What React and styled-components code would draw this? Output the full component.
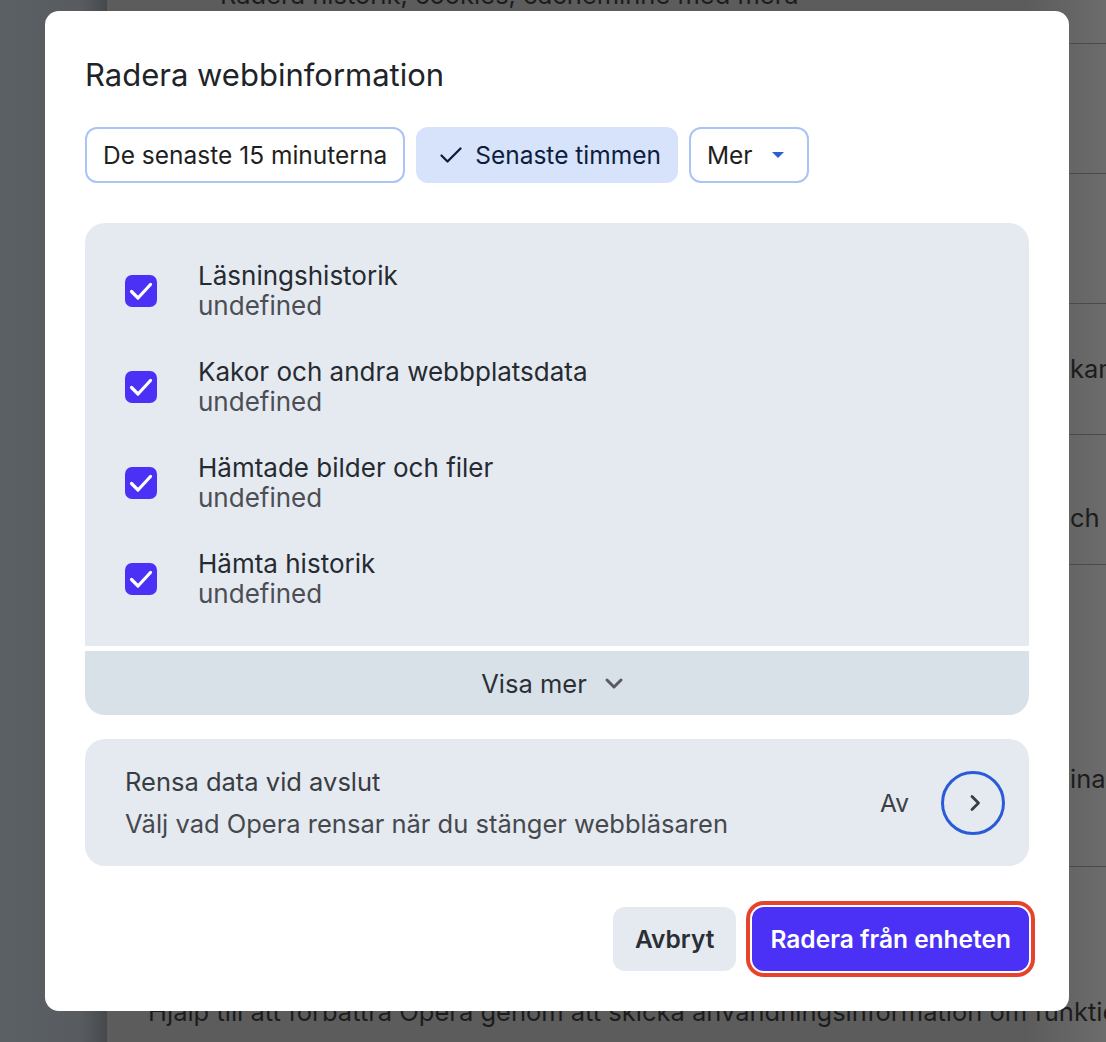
import React from "react";
import styled, { createGlobalStyle } from "styled-components";

const GlobalStyle = createGlobalStyle`
  * { box-sizing: border-box; }
  html, body { margin: 0; padding: 0; height: 100%; overflow: hidden; }
  body { font-family: Inter, "Noto Sans", "Liberation Sans", sans-serif; }
  #root { height: 100%; }
`;

/* dimmed settings page behind the dialog */
const Page = styled.div`
  display: flex;
  height: 100vh;
  background: #5c5c5c;
`;
const Sidebar = styled.div`
  width: 107px;
  flex-shrink: 0;
  background: linear-gradient(to right, #5b6064 0%, #585c60 75%, #46494c 100%);
`;
const Content = styled.div`
  flex: 1;
  display: flex;
  flex-direction: column;
  margin-top: -20px;
  background: linear-gradient(to right, #5c5c5c 0%, #5c5c5c 92%, #6c6c6c 100%);
  overflow: hidden;
`;
const BgRow = styled.div`
  height: ${(p) => p.$h}px;
  flex-shrink: 0;
  display: grid;
  grid-template-columns: ${(p) => (p.$full ? "1fr" : "922px 1fr")};
  align-items: ${(p) => (p.$pt !== undefined ? "start" : "center")};
  padding-top: ${(p) => p.$pt || 0}px;
  padding-left: ${(p) => p.$indent || 41}px;
  border-bottom: ${(p) => (p.$line ? "1px solid #4a4a4a" : "none")};
  font-size: 25.5px;
  line-height: 30px;
  color: #1c1c1c;
  white-space: nowrap;
`;
const BgText = styled.span`
  overflow: hidden;
`;

/* dialog */
const Overlay = styled.div`
  position: fixed;
  inset: 0;
  display: flex;
  align-items: flex-start;
  padding: 11px 0 0 45px;
`;
const Dialog = styled.div`
  width: 1024px;
  background: #ffffff;
  border-radius: 14px;
  padding: 46px 40px 40px;
  display: flex;
  flex-direction: column;
`;
const Title = styled.h1`
  margin: 0 0 34px;
  font-size: 31px;
  line-height: 36px;
  font-weight: 400;
  color: #202327;
`;
const Chips = styled.div`
  display: flex;
  gap: 11px;
  margin-bottom: 40px;
`;
const Chip = styled.button`
  height: 56px;
  display: flex;
  align-items: center;
  gap: 12px;
  padding: ${(p) => (p.$selected ? "0 15px 0 21px" : "0 16px")};
  border-radius: 12px;
  border: 2px solid ${(p) => (p.$selected ? "transparent" : "#a9c5f5")};
  background: ${(p) => (p.$selected ? "#d6e3fa" : "#ffffff")};
  color: ${(p) => (p.$selected ? "#0e1d3d" : "#1f1f1f")};
  font-family: inherit;
  font-size: 24.5px;
  cursor: pointer;
`;
const ListPanel = styled.div`
  background: #e5e9f0;
  border-radius: 20px 20px 0 0;
  padding: 20px 0 19px;
  display: flex;
  flex-direction: column;
`;
const Item = styled.label`
  height: 96px;
  display: flex;
  align-items: center;
  gap: 41px;
  padding-left: 40px;
`;
const Box = styled.span`
  width: 32px;
  height: 32px;
  border-radius: 7px;
  background: #4a31f5;
  display: flex;
  align-items: center;
  justify-content: center;
`;
const ItemText = styled.div`
  display: flex;
  flex-direction: column;
`;
const ItemTitle = styled.span`
  font-size: 26px;
  line-height: 30px;
  color: #262b31;
`;
const ItemSub = styled.span`
  font-size: 26px;
  line-height: 30px;
  color: #4b4f54;
`;
const ShowMore = styled.button`
  margin-top: 5px;
  height: 64px;
  border: none;
  border-radius: 0 0 20px 20px;
  background: #d9e1e8;
  display: flex;
  align-items: center;
  justify-content: center;
  gap: 16px;
  padding: 0 8px 0 0;
  font-family: inherit;
  font-size: 25.5px;
  color: #2b3036;
  cursor: pointer;
`;
const ExitPanel = styled.div`
  margin-top: 24px;
  background: #e5e9f0;
  border-radius: 20px;
  padding: 28px 24px 27px 40px;
  display: flex;
  align-items: center;
`;
const ExitText = styled.div`
  flex: 1;
  display: flex;
  flex-direction: column;
  gap: 12px;
`;
const ExitTitle = styled.span`
  font-size: 25.5px;
  line-height: 30px;
  color: #393d41;
`;
const ExitSub = styled.span`
  font-size: 25.5px;
  line-height: 30px;
  color: #45494d;
`;
const State = styled.span`
  font-size: 24.5px;
  color: #3c4043;
  margin-right: 32px;
`;
const RoundButton = styled.button`
  width: 64px;
  height: 64px;
  border-radius: 50%;
  border: 3px solid #2a5bd7;
  background: transparent;
  display: flex;
  align-items: center;
  justify-content: center;
  padding: 0 0 0 3px;
  cursor: pointer;
`;
const Actions = styled.div`
  margin-top: 41px;
  display: flex;
  justify-content: flex-end;
  gap: 16px;
`;
const Button = styled.button`
  height: 64px;
  padding: 0 ${(p) => (p.$primary ? 18 : 22)}px;
  border: none;
  border-radius: 12px;
  background: ${(p) => (p.$primary ? "#4a31f5" : "#e5e9f0")};
  color: ${(p) => (p.$primary ? "#ffffff" : "#2a2f35")};
  box-shadow: ${(p) =>
    p.$primary ? "0 0 0 2px #ffffff, 0 0 0 6px #e6432c" : "none"};
  font-family: inherit;
  font-size: 24.5px;
  font-weight: 600;
  cursor: pointer;
`;

const Check = ({ color = "#fff", size = 24, width = 3.2, d = "M2.5 12.5l6.5 6.5L21.5 5.5" }) => (
  <svg width={size} height={size} viewBox="0 0 24 24" fill="none">
    <path
      d={d}
      stroke={color}
      strokeWidth={width}
      strokeLinecap="round"
      strokeLinejoin="round"
    />
  </svg>
);

const items = [
  "Läsningshistorik",
  "Kakor och andra webbplatsdata",
  "Hämtade bilder och filer",
  "Hämta historik",
];

export default function App() {
  return (
    <>
      <GlobalStyle />
      <Page>
        <Sidebar />
        <Content>
          <BgRow $h={64} $indent={113} $pt={0} $full $line>
            <BgText>Radera historik, cookies, cacheminne med mera</BgText>
          </BgRow>
          <BgRow $h={130} $line />
          <BgRow $h={130} $line />
          <BgRow $h={131} $line>
            <span />
            <BgText>kamera</BgText>
          </BgRow>
          <BgRow $h={130} $pt={68} $line>
            <span />
            <BgText>ch kort</BgText>
          </BgRow>
          <BgRow $h={302} $pt={199} $line>
            <span />
            <BgText>inaktiverad</BgText>
          </BgRow>
          <BgRow $h={130} />
          <BgRow $h={40} $pt={0} $full>
            <BgText>
              Hjälp till att förbättra Opera genom att skicka användningsinformation om funktioner
            </BgText>
          </BgRow>
        </Content>
      </Page>

      <Overlay>
        <Dialog>
          <Title>Radera webbinformation</Title>
          <Chips>
            <Chip>De senaste 15 minuterna</Chip>
            <Chip $selected>
              <Check color="#0e1d3d" width={2.3} d="M2.5 12.5l6 6L21.5 5.5" />
              Senaste timmen
            </Chip>
            <Chip>
              Mer
              <svg width="26" height="12" viewBox="0 0 26 12">
                <path d="M7 3h12l-6 6z" fill="#2d5fd4" />
              </svg>
            </Chip>
          </Chips>

          <ListPanel>
            {items.map((label) => (
              <Item key={label}>
                <Box>
                  <Check />
                </Box>
                <ItemText>
                  <ItemTitle>{label}</ItemTitle>
                  <ItemSub>undefined</ItemSub>
                </ItemText>
              </Item>
            ))}
          </ListPanel>
          <ShowMore>
            Visa mer
            <svg width="22" height="14" viewBox="0 0 22 14" fill="none">
              <path
                d="M4 4l7 7 7-7"
                stroke="#585c61"
                strokeWidth="3"
                strokeLinecap="round"
                strokeLinejoin="round"
              />
            </svg>
          </ShowMore>

          <ExitPanel>
            <ExitText>
              <ExitTitle>Rensa data vid avslut</ExitTitle>
              <ExitSub>Välj vad Opera rensar när du stänger webbläsaren</ExitSub>
            </ExitText>
            <State>Av</State>
            <RoundButton aria-label="Öppna">
              <svg width="14" height="20" viewBox="0 0 14 20" fill="none">
                <path
                  d="M4 3.5l6.5 6.5L4 16.5"
                  stroke="#3a3d40"
                  strokeWidth="2.8"
                  strokeLinecap="round"
                  strokeLinejoin="round"
                />
              </svg>
            </RoundButton>
          </ExitPanel>

          <Actions>
            <Button>Avbryt</Button>
            <Button $primary>Radera från enheten</Button>
          </Actions>
        </Dialog>
      </Overlay>
    </>
  );
}
